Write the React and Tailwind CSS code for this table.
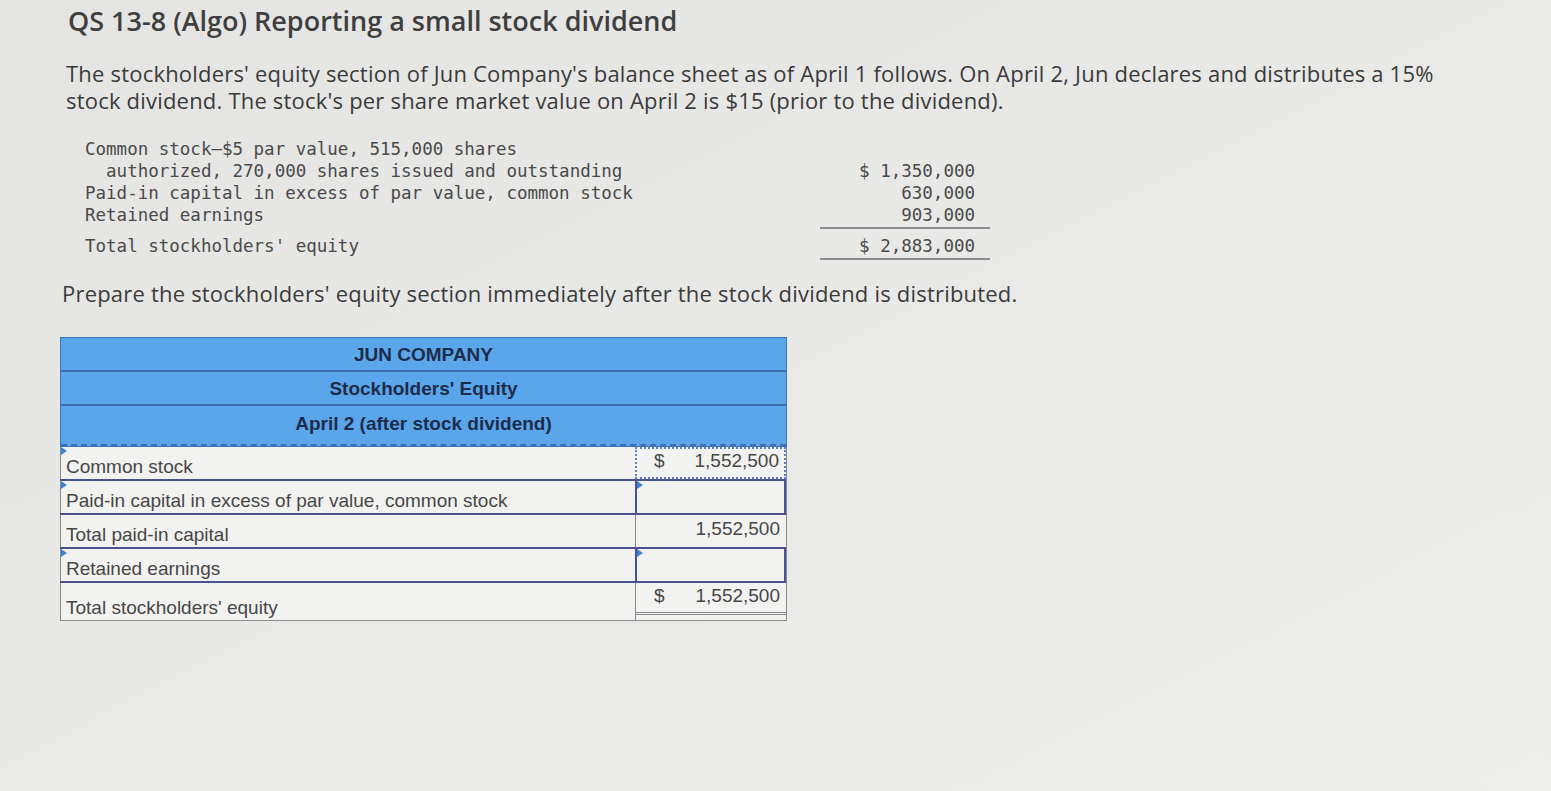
import React from "react";

const balance = [
  { label: "Common stock\u2014$5 par value, 515,000 shares", amount: "" },
  { label: "  authorized, 270,000 shares issued and outstanding", amount: "$ 1,350,000" },
  { label: "Paid-in capital in excess of par value, common stock", amount: "630,000" },
  { label: "Retained earnings", amount: "903,000", rule: true },
  { label: "Total stockholders' equity", amount: "$ 2,883,000", rule: true, gap: true },
];

// little blue marker shown in the corner of editable / dropdown cells
function Marker() {
  return (
    <span className="absolute left-0 top-0 h-0 w-0 border-y-[4px] border-l-[6px] border-y-transparent border-l-[#3d7fd6]" />
  );
}

function LabelCell({ children, marker, tall }) {
  return (
    <div
      className={`relative flex w-[575px] items-end border-l border-[#8a8a8a] pb-[1px] pl-[5px] ${
        tall ? "h-[37px]" : "h-[32px]"
      }`}
    >
      {marker && <Marker />}
      <span className="leading-[22px]">{children}</span>
    </div>
  );
}

export default function App() {
  return (
    <div className="min-h-screen w-full overflow-hidden bg-linear-to-br from-[#e4e4e2] to-[#eeeeec] font-['Open_Sans',sans-serif] text-[#3b3b3b]">
      {/* Title */}
      <h1 className="pl-[68px] pt-[4px] text-[27px] font-semibold leading-[34px] text-[#3f3f3f]">
        QS 13-8 (Algo) Reporting a small stock dividend
      </h1>

      {/* Problem text */}
      <p className="mt-[22px] whitespace-nowrap pl-[66px] text-[22px] leading-[27px] tracking-[0.2px]">
        The stockholders' equity section of Jun Company's balance sheet as of April 1 follows. On April 2, Jun declares and distributes a 15%
        <br />
        stock dividend. The stock's per share market value on April 2 is $15 (prior to the dividend).
      </p>

      {/* April 1 balances */}
      <div className="mt-[24px] flex flex-col pl-[85px] font-['DejaVu_Sans_Mono',monospace] text-[17.5px] text-[#4a4a4a]">
        {balance.map((row, i) => (
          <div key={i} className={`flex ${row.gap ? "mt-[6px]" : ""}`}>
            <div className="w-[735px] whitespace-pre leading-[22px]">{row.label}</div>
            <div
              className={`w-[170px] pr-[15px] text-right leading-[22px] ${
                row.rule ? "border-b-2 border-[#8d8d8d] pb-[1px]" : ""
              }`}
            >
              {row.amount}
            </div>
          </div>
        ))}
      </div>

      <p className="mt-[20px] pl-[62px] text-[22px] leading-[27px] tracking-[0.2px]">
        Prepare the stockholders' equity section immediately after the stock dividend is distributed.
      </p>

      {/* Answer table */}
      <div className="ml-[60px] mt-[30px] w-[727px] font-['Liberation_Sans',Arial,sans-serif] text-[19px] text-[#474747]">
        <div className="border border-[#3f74b8] bg-[#5ba6ea] text-center text-[19px] font-semibold text-[#1d2c4c]">
          <div className="h-[34px] border-b-2 border-[#3f6fb0] pt-[7px] leading-[20px]">JUN COMPANY</div>
          <div className="h-[34px] border-b-2 border-[#3f6fb0] pt-[7px] leading-[20px]">Stockholders' Equity</div>
          <div className="h-[40px] border-b-2 border-dashed border-[#3f6fb0] pt-[8px] leading-[20px]">
            April 2 (after stock dividend)
          </div>
        </div>

        <div className="border-b border-r border-[#8a8a8a] bg-[#f2f2f0]">
          {/* Common stock */}
          <div className="flex border-b-2 border-[#4c5192]">
            <LabelCell marker>Common stock</LabelCell>
            <div className="flex h-[32px] flex-1 items-start justify-between border-2 border-dotted border-[#5a7fc9] px-[5px] pt-[1px] leading-[22px]">
              <span className="pl-[12px]">$</span>
              <span>1,552,500</span>
            </div>
          </div>

          {/* Paid-in capital input */}
          <div className="flex border-b-2 border-[#4c5192]">
            <LabelCell marker>Paid-in capital in excess of par value, common stock</LabelCell>
            <div className="relative h-[32px] flex-1 border-x-2 border-[#4c5192]">
              <Marker />
            </div>
          </div>

          {/* Total paid-in */}
          <div className="flex border-b-2 border-[#4c5192]">
            <LabelCell>Total paid-in capital</LabelCell>
            <div className="flex h-[32px] flex-1 items-start justify-end border-l border-[#8a8a8a] px-[6px] pt-[3px] leading-[22px]">
              1,552,500
            </div>
          </div>

          {/* Retained earnings input */}
          <div className="flex border-b-2 border-[#4c5192]">
            <LabelCell marker>Retained earnings</LabelCell>
            <div className="relative h-[32px] flex-1 border-x-2 border-[#4c5192]">
              <Marker />
            </div>
          </div>

          {/* Total equity */}
          <div className="flex">
            <LabelCell tall>Total stockholders' equity</LabelCell>
            <div className="h-[37px] flex-1 border-l border-[#8a8a8a]">
              <div className="flex h-[32px] items-start justify-between border-b-[3px] border-double border-[#8a8a8a] px-[6px] pt-[2px] leading-[22px]">
                <span className="pl-[12px]">$</span>
                <span>1,552,500</span>
              </div>
            </div>
          </div>
        </div>
      </div>
    </div>
  );
}
